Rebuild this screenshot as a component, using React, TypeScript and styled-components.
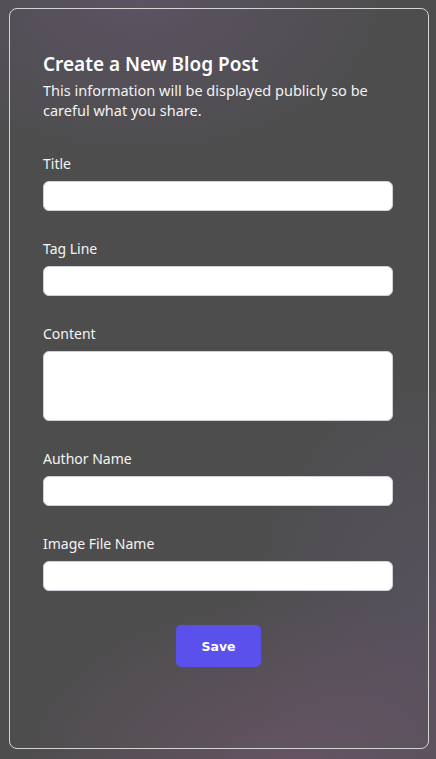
import styled, { createGlobalStyle } from 'styled-components'

const GlobalStyle = createGlobalStyle`
  html, body {
    margin: 0;
    padding: 0;
    height: 100%;
  }

  body {
    font-family: 'Noto Sans', 'Open Sans', sans-serif;
    background-color: #4d4d4d;
    background-image:
      radial-gradient(ellipse 260px 160px at 140px 0px, rgba(110, 90, 125, 0.45), transparent),
      radial-gradient(ellipse 280px 180px at 290px 770px, rgba(125, 90, 120, 0.5), transparent),
      radial-gradient(ellipse 200px 260px at 436px 620px, rgba(105, 90, 125, 0.35), transparent);
    color: #fff;
  }
`

const Page = styled.div`
  padding: 8px 8px 10px 9px;
  min-height: 759px;
  box-sizing: border-box;
`

const Card = styled.div`
  width: 420px;
  height: 741px;
  box-sizing: border-box;
  border: 1px solid #d4d4d4;
  border-radius: 8px;
  padding: 42px 34px 0 33px;
`

const Header = styled.div`
  display: flex;
  flex-direction: column;
  gap: 3px;
  margin-bottom: 34px;
`

const Heading = styled.h2`
  margin: 0;
  font-size: 19px;
  line-height: 26px;
  font-weight: 600;
  color: #fff;
`

const Subtitle = styled.p`
  margin: 0;
  font-size: 14.5px;
  line-height: 20px;
  color: #f2f2f2;
`

const Form = styled.form`
  display: flex;
  flex-direction: column;
  gap: 28px;
`

const Field = styled.div`
  display: flex;
  flex-direction: column;
  gap: 7px;
`

const Label = styled.label`
  font-size: 14px;
  line-height: 20px;
  color: #f4f4f4;
`

const Input = styled.input`
  width: 350px;
  height: 30px;
  box-sizing: border-box;
  border: 1px solid #d0d0d8;
  border-radius: 6px;
  background: #fff;
  padding: 0 10px;
  font-size: 14px;
  outline: none;
`

const TextArea = styled.textarea`
  width: 350px;
  height: 70px;
  box-sizing: border-box;
  border: 1px solid #d0d0d8;
  border-radius: 6px;
  background: #fff;
  padding: 6px 10px;
  font-size: 14px;
  resize: none;
  outline: none;
  display: block;
`

const Actions = styled.div`
  display: flex;
  justify-content: center;
  padding-top: 6px;
`

const SaveButton = styled.button`
  width: 85px;
  height: 42px;
  border: none;
  border-radius: 5px;
  background-color: #5a50ec;
  color: #fff;
  font-family: 'DejaVu Sans', Verdana, sans-serif;
  font-size: 12.5px;
  font-weight: 700;
  cursor: pointer;
`

const fields = [
  { id: 'title', label: 'Title' },
  { id: 'tagline', label: 'Tag Line' },
  { id: 'content', label: 'Content', multiline: true },
  { id: 'author', label: 'Author Name' },
  { id: 'image', label: 'Image File Name' },
]

const App = () => {
  return (
    <>
      <GlobalStyle />
      <Page>
        <Card>
          <Header>
            <Heading>Create a New Blog Post</Heading>
            <Subtitle>
              This information will be displayed publicly so be careful what you share.
            </Subtitle>
          </Header>
          <Form onSubmit={(e) => e.preventDefault()}>
            {fields.map((f) => (
              <Field key={f.id}>
                <Label htmlFor={f.id}>{f.label}</Label>
                {f.multiline ? <TextArea id={f.id} /> : <Input id={f.id} type="text" />}
              </Field>
            ))}
            <Actions>
              <SaveButton type="submit">Save</SaveButton>
            </Actions>
          </Form>
        </Card>
      </Page>
    </>
  )
}

export default App
